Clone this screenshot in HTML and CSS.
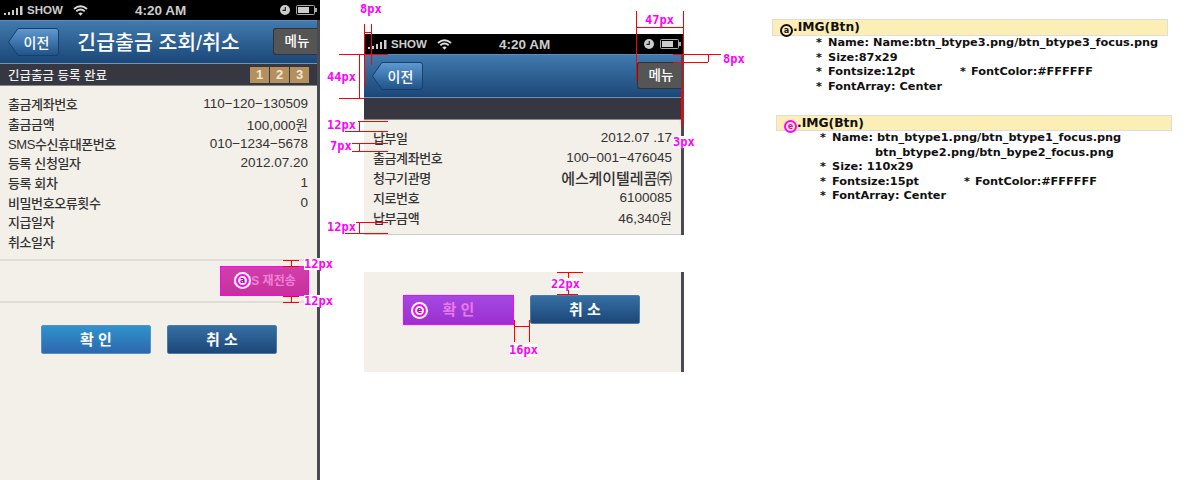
FILE: index.html
```html
<!DOCTYPE html>
<html lang="ko"><head><meta charset="utf-8"><title>긴급출금 조회/취소</title>
<link rel="stylesheet" href="styles.css">
</head><body>
<svg class="defs" width="0" height="0">
   <defs>
      <linearGradient id="backfill" x1="0" y1="0" x2="0" y2="1">
         <stop offset="0" stop-color="#5f9ad2"/>
         <stop offset="1" stop-color="#1f5288"/>
      </linearGradient>
      <symbol id="signal" viewBox="0 0 19 9">
         <rect x="0" y="7" width="2" height="2"/><rect x="4" y="6" width="2" height="3"/>
         <rect x="8" y="4" width="2" height="5"/><rect x="12" y="2" width="2" height="7"/>
         <rect x="16" y="0" width="2.500" height="9"/>
      </symbol>
      <symbol id="wifi" viewBox="0 0 15 11">
         <path d="M1 4Q7.500 -1.500 14 4M3.300 6.300Q7.500 2.800 11.700 6.300" fill="none" stroke="#ddd" stroke-width="1.900"/>
         <path d="M5.300 8.300Q7.500 6.600 9.700 8.300L7.500 10.800Z" fill="#ddd"/>
      </symbol>
      <symbol id="clock" viewBox="0 0 10 10">
         <circle cx="5" cy="5" r="5" fill="#ccc"/>
         <path d="M5.300 2V5.400H2.500" fill="none" stroke="#222" stroke-width="1.200"/>
      </symbol>
      <symbol id="battery" viewBox="0 0 21 10">
         <rect x=".5" y=".5" width="18" height="9" rx="1" fill="none" stroke="#aaa"/>
         <rect x="2" y="2" width="11" height="6" fill="#ccc"/>
         <rect x="19" y="3" width="2" height="4" fill="#aaa"/>
      </symbol>
      <symbol id="backshape" viewBox="0 0 51 28">
         <path d="M10 .5H48Q50.500 .5 50.500 3V25Q50.500 27.500 48 27.500H10L.5 14Z" fill="url(#backfill)" stroke="#173f6b"/>
      </symbol>
   </defs>
</svg>
<div class="page">
   <div class="screen">
      <div class="status">
         <svg class="ic-signal"><use href="#signal"/></svg><span class="carrier">SHOW</span>
         <svg class="ic-wifi"><use href="#wifi"/></svg><span class="time">4:20 AM</span>
         <svg class="ic-clock"><use href="#clock"/></svg><svg class="ic-battery"><use href="#battery"/></svg>
      </div>
      <div class="body tall">
         <div class="nav">
            <div class="back"><svg class="backbg"><use href="#backshape"/></svg><span>이전</span></div>
            <div class="title">긴급출금 조회/취소</div>
            <div class="menu">메뉴</div>
         </div>
         <div class="subbar">
            <span>긴급출금 등록 완료</span>
            <div class="steps"><b>1</b><b>2</b><b>3</b></div>
         </div>
         <div class="rows rows-main">
            <div class="row"><span>출금계좌번호</span><span>110−120−130509</span></div>
            <div class="row"><span>출금금액</span><span>100,000원</span></div>
            <div class="row"><span>SMS수신휴대폰번호</span><span>010−1234−5678</span></div>
            <div class="row"><span>등록 신청일자</span><span>2012.07.20</span></div>
            <div class="row"><span>등록 회차</span><span>1</span></div>
            <div class="row"><span>비밀번호오류횟수</span><span>0</span></div>
            <div class="row"><span>지급일자</span><span></span></div>
            <div class="row"><span>취소일자</span><span></span></div>
         </div>
         <div class="resend">
            <div class="btn-sms"><i class="mark mark-sms">a</i>SMS 재전송</div>
         </div>
         <div class="actions actions-main">
            <div class="btn btn-ok">확 인</div>
            <div class="btn btn-cancel">취 소</div>
         </div>
      </div>
   </div>

   <div class="screen screen-mid">
      <div class="status">
         <svg class="ic-signal"><use href="#signal"/></svg><span class="carrier">SHOW</span>
         <svg class="ic-wifi"><use href="#wifi"/></svg><span class="time">4:20 AM</span>
         <svg class="ic-clock"><use href="#clock"/></svg><svg class="ic-battery"><use href="#battery"/></svg>
      </div>
      <div class="body">
         <div class="nav">
            <div class="back"><svg class="backbg"><use href="#backshape"/></svg><span>이전</span></div>
            <div></div>
            <div class="menu">메뉴</div>
         </div>
         <div class="subbar"></div>
         <div class="rows rows-mid">
            <div class="row"><span>납부일</span><span>2012.07 .17</span></div>
            <div class="row"><span>출금계좌번호</span><span>100−001−476045</span></div>
            <div class="row"><span>청구기관명</span><span class="wide">에스케이텔레콤㈜</span></div>
            <div class="row"><span>지로번호</span><span>6100085</span></div>
            <div class="row"><span>납부금액</span><span>46,340원</span></div>
         </div>
      </div>
      <div class="body panel">
         <div class="btn btn-focus"><i class="mark mark-ok">e</i>확 인</div>
         <div class="btn btn-cancel">취 소</div>
      </div>
   </div>

   <div class="specs">
      <div class="spec">
         <div class="spec-head"><i class="chip">a</i>.IMG(Btn)</div>
         <ul>
            <li>Name: Name:btn_btype3.png/btn_btype3_focus.png</li>
            <li>Size:87x29</li>
            <li class="pair"><span>Fontsize:12pt</span><span class="star">FontColor:#FFFFFF</span></li>
            <li>FontArray: Center</li>
         </ul>
      </div>
      <div class="spec spec-two">
         <div class="spec-head"><i class="chip chip-e">e</i>.IMG(Btn)</div>
         <ul>
            <li>Name: btn_btype1.png/btn_btype1_focus.png<br><span class="cont">btn_btype2.png/btn_bype2_focus.png</span></li>
            <li>Size: 110x29</li>
            <li class="pair"><span>Fontsize:15pt</span><span class="star">FontColor:#FFFFFF</span></li>
            <li>FontArray: Center</li>
         </ul>
      </div>
   </div>

   <svg class="lines" viewBox="0 0 1200 480">
      <path d="M364.500 24V54M371.500 24V65M364 32.500H371
         M339 54.500H388M339 98.500H364M359.500 54V98M364.500 54V87
         M358 121.500H388M345 131.500H388M359.500 121V131
         M345 143.500H388M345 151.500H388M359.500 143V151
         M345 222.500H388M345 233.500H388M359.500 222V233
         M636.500 11V81M683.500 11V125M636 27.500H683
         M673 54.500H721M673 62.500H708M708.500 54V62
         M681.500 89V125M681 113.500H683
         M283 260.500H299M283 266.500H299M291.500 260V266
         M283 296.500H299M283 302.500H299M291.500 296V302
         M557 272.500H583M557 294.500H578M568.500 272V294
         M514.500 320V342M529.500 320V342M514 326.500H529" fill="none" stroke="#f00"/>
   </svg>
   <span class="dim d-top8">8px</span>
   <span class="dim d-44">44px</span>
   <span class="dim d-12a">12px</span>
   <span class="dim d-7">7px</span>
   <span class="dim d-12b">12px</span>
   <span class="dim d-47">47px</span>
   <span class="dim d-right8">8px</span>
   <span class="dim d-3">3px</span>
   <span class="dim d-12c">12px</span>
   <span class="dim d-12d">12px</span>
   <span class="dim d-22">22px</span>
   <span class="dim d-16">16px</span>
</div>
</body></html>
```

FILE: styles.css
```css
html, body
{
	margin: 0;
	height: 100%;
	background-color: #fff;
	overflow: hidden;
}
body { font-family: "Liberation Sans", "Noto Sans CJK KR", sans-serif; color: #333; }
.defs { position: absolute; }
.page { position: relative; display: flex; width: 1200px; height: 480px; }

.screen { flex: none; width: 320px; display: flex; flex-direction: column; }
.screen-mid { margin-left: 44px; padding-top: 34px; }

/* status bar */
.status
{
	flex: none;
	display: flex;
	align-items: center;
	height: 20px;
	background-color: #000;
	color: #ccc;
	font-size: 12px;
	font-weight: bold;
}
.ic-signal { width: 19px; height: 9px; margin-left: 4px; fill: #ccc; }
.carrier { margin-left: 4px; width: 36px; font-size: 11.500px; }
.ic-wifi { width: 15px; height: 11px; margin-left: 10px; }
.time { margin-left: 47px; font-size: 13.500px; flex: 1; }
.ic-clock { width: 10px; height: 10px; }
.ic-battery { width: 21px; height: 10px; margin: 0 3px 0 6px; }

.body
{
	background-color: #f3efe9;
	border-right: 3px solid #4a4a50;
}
.tall { flex: 1; }

/* nav */
.nav
{
	display: grid;
	grid-template-columns: 1fr auto 1fr;
	align-items: start;
	box-sizing: border-box;
	height: 44px;
	padding-top: 8px;
	background: linear-gradient(#417aae, #1b4778);
	border-top: 1px solid #5b8cbb;
	border-bottom: 1px solid #6a94b8;
}
.back
{
	position: relative;
	width: 51px;
	height: 28px;
	margin: -1px 0 0 8px;
	display: flex;
	align-items: center;
	justify-content: center;
	padding-left: 6px;
	box-sizing: border-box;
	color: #fff;
	font-size: 14px;
	font-weight: 500;
}
.back span { position: relative; }
.backbg { position: absolute; left: 0; top: 0; width: 51px; height: 28px; }
.title { color: #fff; font-size: 20.500px; line-height: 28px; font-weight: 500; }
.menu
{
	justify-self: end;
	width: 44px;
	height: 27px;
	margin-top: -1px;
	padding-left: 3px;
	line-height: 26px;
	text-align: center;
	color: #fff;
	font-size: 13.500px;
	font-weight: 500;
	background-color: #555;
	border: 1px solid #333;
	border-right: 0;
	border-radius: 3px 0 0 3px;
	box-sizing: border-box;
}

.subbar
{
	display: flex;
	align-items: center;
	justify-content: space-between;
	box-sizing: border-box;
	height: 22px;
	padding: 0 8px;
	background-color: #373741;
	border-bottom: 1px solid #888;
	color: #eee;
	font-size: 12.500px;
	font-weight: 500;
}
.steps { display: flex; gap: 1px; }
.steps b
{
	width: 19px;
	height: 16px;
	line-height: 16px;
	text-align: center;
	background-color: #b5905f;
	color: #f3e6d3;
	font-size: 13px;
}

.rows { display: flex; flex-direction: column; padding: 0 9px 0 8px; font-size: 13.500px; }
.rows-main { padding-top: 8px; height: 173px; box-sizing: border-box; }
.rows-mid { padding: 7px 9px 7px 9px; border-bottom: 1px solid #ccc; }
.row { display: flex; justify-content: space-between; align-items: center; height: 19.700px; }
.row span:first-child { font-size: 13px; font-weight: 500; letter-spacing: -.4px; }
.rows-mid .row { height: 20px; }
.wide { font-size: 15px; font-weight: 500; letter-spacing: -.1px; }

.resend
{
	display: flex;
	justify-content: flex-end;
	align-items: center;
	box-sizing: border-box;
	height: 44px;
	padding-right: 8px;
	border-top: 2px solid #e0dcd6;
	border-bottom: 2px solid #e0dcd6;
}
.btn-sms
{
	position: relative;
	box-sizing: border-box;
	width: 89px;
	height: 30px;
	line-height: 28px;
	text-align: center;
	color: #f080d8;
	font-size: 12px;
	font-weight: bold;
	background: linear-gradient(#d23fac, #c6309a);
	border: 1px solid #f0f;
}

.actions-main { display: flex; gap: 16px; padding: 22px 0 0 41px; }
.btn
{
	box-sizing: border-box;
	width: 110px;
	height: 29px;
	line-height: 27px;
	text-align: center;
	color: #fff;
	font-size: 15px;
	font-weight: bold;
	border-radius: 2px;
}
.btn-ok { background: linear-gradient(#2f93ce, #2c68ad); border: 1px solid #5a8fc0; }
.btn-cancel { background: linear-gradient(#366fa3, #1c4779); border: 1px solid #4d7ba5; }

.panel
{
	display: flex;
	gap: 16px;
	height: 100px;
	margin-top: 37px;
	padding: 23px 0 0 39px;
	box-sizing: border-box;
}
.btn-focus
{
	position: relative;
	width: 111px;
	height: 30px;
	color: #ea7ae8;
	background: linear-gradient(#a648e2, #9a30d0);
	border: 1px solid #f0f;
	border-radius: 0;
}

/* annotation marks */
.mark
{
	position: absolute;
	box-sizing: border-box;
	width: 13px;
	height: 13px;
	line-height: 9px;
	text-align: center;
	font-family: "DejaVu Sans", sans-serif;
	font-size: 8px;
	font-style: normal;
	font-weight: bold;
	color: #a000a0;
	background-color: #fff;
	border: 2px solid #f0f;
	border-radius: 50%;
	box-shadow: 0 0 0 2px #fff;
}
.mark-sms { left: 15px; top: 7px; }
.mark-ok { left: 9px; top: 8px; }

.dim
{
	position: absolute;
	font-family: "DejaVu Sans Mono", monospace;
	font-size: 12px;
	line-height: 12px;
	font-weight: bold;
	color: #f0f;
	background-color: #fff;
}
.lines { position: absolute; left: 0; top: 0; width: 1200px; height: 480px; pointer-events: none; }
.d-top8 { left: 360px; top: 3px; }
.d-44 { left: 327px; top: 71px; }
.d-12a { left: 327px; top: 119px; }
.d-7 { left: 330px; top: 140px; }
.d-12b { left: 327px; top: 221px; }
.d-47 { left: 645px; top: 14px; }
.d-right8 { left: 723px; top: 53px; }
.d-3 { left: 673px; top: 136px; }
.d-12c { left: 304px; top: 258px; }
.d-12d { left: 304px; top: 295px; }
.d-22 { left: 551px; top: 278px; }
.d-16 { left: 509px; top: 344px; }

/* spec notes */
.specs { margin-left: 88px; padding-top: 19px; width: 396px; font-family: "DejaVu Sans", sans-serif; font-size: 11.300px; font-weight: bold; color: #111; }
.spec { width: 396px; }
.spec-two { margin: 21px 0 0 4px; }
.spec-two .spec-head { height: 16px; }
.spec-two ul { margin-top: -1px; }
.spec-head
{
	box-sizing: border-box;
	height: 17px;
	line-height: 15px;
	padding-left: 7px;
	background-color: #fdeeb5;
	border: 1px solid #ddd;
	font-size: 12.300px;
}
.chip
{
	display: inline-block;
	box-sizing: border-box;
	width: 13px;
	height: 13px;
	line-height: 9px;
	text-align: center;
	font-size: 8px;
	font-style: normal;
	border: 2px solid #111;
	border-radius: 50%;
	vertical-align: -2px;
}
.chip-e { color: #e000e0; border-color: #f0f; }
.spec ul { list-style: none; margin: 0; padding: 0 0 0 44px; line-height: 14.500px; }
.spec li { padding-left: 12px; position: relative; }
.spec li::before, .star::before { content: "*"; }
.spec li::before { position: absolute; left: 0; }
.pair { display: flex; }
.pair span:first-child { width: 132px; }
.star::before { margin-right: 5px; }
.cont { padding-left: 43px; }
```
